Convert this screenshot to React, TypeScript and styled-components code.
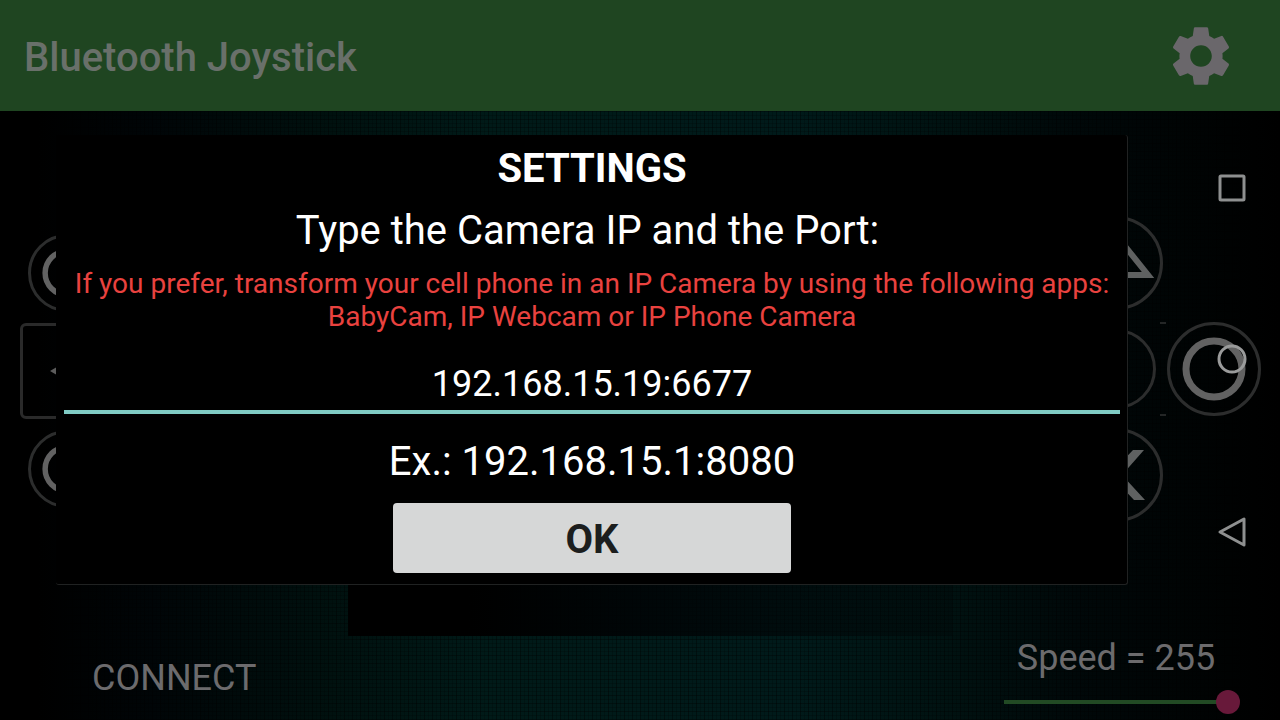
import React, { useState } from "react";
import styled, { createGlobalStyle } from "styled-components";
import { MdSettings } from "react-icons/md";

const GlobalStyle = createGlobalStyle`
  *, *::before, *::after { box-sizing: border-box; }
  body { margin: 0; background: #000; }
  button, input { font-family: inherit; }
`;

const Screen = styled.div`
  position: relative;
  display: flex;
  flex-direction: column;
  min-height: 100vh;
  overflow: hidden;
  font-family: Roboto, "Liberation Sans", sans-serif;
  color: #6c6b6d;
  background:
    repeating-linear-gradient(90deg, rgba(0, 0, 0, 0.4) 0 1px, transparent 1px 4px, rgba(0, 0, 0, 0.2) 4px 5px, transparent 5px 8px),
    repeating-linear-gradient(0deg, rgba(0, 0, 0, 0.35) 0 1px, transparent 1px 4px, rgba(0, 0, 0, 0.2) 4px 5px, transparent 5px 8px),
    linear-gradient(90deg, #000 3%, #000507 12%, #00110f 26%, #001a18 38%, #001a1a 62%, #001211 74%, #000809 84%, #000202 96%, #000 100%);
`;

const AppBar = styled.header`
  display: flex;
  align-items: center;
  justify-content: space-between;
  height: 111px;
  padding: 0 43px 0 24px;
  background: #1f4521;
`;

const Title = styled.h1`
  margin: 4px 0 0;
  font-size: 40px;
  font-weight: 500;
  line-height: 48px;
  color: #69706a;
`;

const PlainButton = styled.button`
  display: flex;
  align-items: center;
  justify-content: center;
  padding: 0;
  border: 0;
  background: none;
  color: inherit;
`;

const Controls = styled.main`
  display: flex;
  flex: 1;
`;

const DirectionPad = styled.section`
  display: flex;
  flex: 0 0 348px;
  flex-direction: column;
  justify-content: center;
  gap: 11px;
  padding: 0 0 5px 20px;
`;

const RoundKey = styled(PlainButton)<{ $size: number }>`
  width: ${(p) => p.$size}px;
  height: ${(p) => p.$size}px;
  border: 3px solid #2c2d2d;
  border-radius: 50%;
  justify-self: center;
  margin-left: ${(p) => (p.$size === 78 ? 8 : 0)}px;
`;

const ArrowKey = styled(PlainButton)`
  width: 94px;
  height: 96px;
  border: 3px solid #2a2a2a;
  border-radius: 6px;
`;

const VideoPanel = styled.div`
  flex: 1;
  margin-top: 48px;
  background: linear-gradient(90deg, #000 20%, rgba(0, 3, 5, 0.85) 50%, rgba(0, 5, 6, 0.3) 100%);
`;

const ActionPad = styled.section`
  display: grid;
  flex: 0 0 328px;
  grid-template-columns: 94px 94px;
  gap: 12px 4px;
  align-content: center;
  align-items: center;
  justify-content: end;
  padding: 0 19px 9px 0;
`;

const OuterCell = styled.div`
  position: relative;
  &::before,
  &::after {
    content: "";
    position: absolute;
    left: -7px;
    width: 6px;
    height: 2px;
    background: #242626;
  }
  &::before { top: 0; }
  &::after { bottom: 0; }
`;

const FirstColumnKey = styled(RoundKey)`
  grid-column: 1;
`;

const Footer = styled.footer`
  display: flex;
  align-items: center;
  justify-content: space-between;
  height: 84px;
  padding: 0 40px 0 92px;
  font-size: 36px;
  line-height: 42px;
`;

const ConnectButton = styled(PlainButton)`
  font-size: 36px;
  line-height: 42px;
`;

const SpeedControl = styled.div`
  display: flex;
  flex-direction: column;
  gap: 11px;
  width: 236px;
  padding-bottom: 5px;
`;

const SpeedLabel = styled.label`
  padding-right: 12px;
  text-align: center;
  white-space: nowrap;
`;

const SpeedSlider = styled.input`
  appearance: none;
  width: 100%;
  height: 24px;
  margin: 0;
  background: none;
  &::-webkit-slider-runnable-track {
    height: 4px;
    background: linear-gradient(90deg, #224a24 95%, transparent 95%);
  }
  &::-webkit-slider-thumb {
    appearance: none;
    width: 24px;
    height: 24px;
    margin-top: -10px;
    border-radius: 50%;
    background: #68193a;
  }
`;

const SystemNav = styled.nav`
  position: absolute;
  top: 174px;
  right: 33px;
  bottom: 172px;
  display: flex;
  flex-direction: column;
  justify-content: space-between;
  align-items: center;
`;

const Dialog = styled.div`
  position: absolute;
  top: 135px;
  left: 56px;
  right: 152px;
  display: flex;
  flex-direction: column;
  padding: 10px 7px 11px 8px;
  border: solid #202222;
  border-width: 0 1px 1px 0;
  border-radius: 3px;
  background: #000;
  color: #fff;
  text-align: center;
  font-size: 40px;
  line-height: 48px;
`;

const DialogTitle = styled.h2`
  margin: 0 0 14px;
  font-size: 40px;
  font-weight: 700;
`;

const FieldLabel = styled.label`
  margin-bottom: 12px;
  padding-right: 9px;
`;

const Hint = styled.p`
  margin: 0 0 25px;
  font-size: 28px;
  line-height: 33px;
  color: #e9423f;
`;

const AddressInput = styled.input`
  width: 100%;
  height: 56px;
  margin-bottom: 24px;
  padding: 0;
  border: 0;
  border-bottom: 4px solid #80cbc4;
  border-radius: 0;
  outline: 0;
  background: none;
  color: #fff;
  font-size: 36px;
  line-height: 42px;
  text-align: center;
`;

const OkButton = styled.button`
  align-self: center;
  width: 398px;
  height: 70px;
  margin-top: 17px;
  padding: 4px 0 0;
  border: 0;
  border-radius: 4px;
  background: #d6d7d7;
  color: #1c1e1e;
  font-size: 40px;
  font-weight: 700;
  line-height: 48px;
`;

const Ring = ({ size }: { size: number }) => (
  <svg width={size} height={size} viewBox="0 0 64 64" fill="none" stroke="#626262" strokeWidth="7">
    <circle cx="32" cy="32" r="28" />
  </svg>
);

export default function App() {
  const [address, setAddress] = useState("192.168.15.19:6677");
  const [speed, setSpeed] = useState(255);

  return (
    <Screen>
      <GlobalStyle />
      <AppBar>
        <Title>Bluetooth Joystick</Title>
        <PlainButton aria-label="Settings">
          <MdSettings size={72} color="#6a676b" />
        </PlainButton>
      </AppBar>

      <Controls>
        <DirectionPad>
          <RoundKey $size={78} aria-label="Upper left">
            <Ring size={50} />
          </RoundKey>
          <ArrowKey aria-label="Left">
            <svg width="34" height="40" viewBox="0 0 34 40" fill="#5c5c5c">
              <path d="M0 20 34 0V40Z" />
            </svg>
          </ArrowKey>
          <RoundKey $size={78} aria-label="Lower left">
            <Ring size={50} />
          </RoundKey>
        </DirectionPad>
        <VideoPanel />
        <ActionPad>
          <FirstColumnKey $size={94} aria-label="Triangle">
            <svg width="80" height="80" viewBox="0 0 80 80" fill="none" stroke="#5f6161" strokeWidth="6">
              <path d="M40 12 72 52H8Z" />
            </svg>
          </FirstColumnKey>
          <FirstColumnKey $size={80} aria-label="Square" />
          <OuterCell>
            <RoundKey $size={94} aria-label="Circle">
              <Ring size={64} />
            </RoundKey>
          </OuterCell>
          <FirstColumnKey $size={94} aria-label="Cross">
            <svg width="60" height="50" viewBox="0 0 60 50" fill="#5f6161">
              <path d="M2 0H13L30 18 47 0H58L36 25 59 50H48L30 31 12 50H1L24 25Z" />
            </svg>
          </FirstColumnKey>
        </ActionPad>
      </Controls>

      <Footer>
        <ConnectButton>CONNECT</ConnectButton>
        <SpeedControl>
          <SpeedLabel htmlFor="speed">Speed = {speed}</SpeedLabel>
          <SpeedSlider
            id="speed"
            type="range"
            min={0}
            max={255}
            value={speed}
            onChange={(e) => setSpeed(Number(e.target.value))}
          />
        </SpeedControl>
      </Footer>

      <Dialog role="dialog" aria-labelledby="settings-title">
        <DialogTitle id="settings-title">SETTINGS</DialogTitle>
        <FieldLabel htmlFor="address">Type the Camera IP and the Port:</FieldLabel>
        <Hint>
          If you prefer, transform your cell phone in an IP Camera by using the following apps: BabyCam, IP Webcam or
          IP Phone Camera
        </Hint>
        <AddressInput id="address" value={address} onChange={(e) => setAddress(e.target.value)} />
        <span>Ex.: 192.168.15.1:8080</span>
        <OkButton>OK</OkButton>
      </Dialog>

      <SystemNav aria-label="System">
        <PlainButton aria-label="Recent apps">
          <svg width="30" height="28" viewBox="0 0 30 28" fill="none" stroke="#8e9090" strokeWidth="3">
            <rect x="3" y="2" width="24" height="24" rx="1" />
          </svg>
        </PlainButton>
        <PlainButton aria-label="Home">
          <svg width="30" height="30" viewBox="0 0 30 30" fill="none" stroke="#9a9b9b" strokeWidth="3">
            <circle cx="15" cy="15" r="13" />
          </svg>
        </PlainButton>
        <PlainButton aria-label="Back">
          <svg width="30" height="32" viewBox="0 0 30 32" fill="none" stroke="#8e9090" strokeWidth="3" strokeLinejoin="round">
            <path d="M3 16 27 3V29Z" />
          </svg>
        </PlainButton>
      </SystemNav>
    </Screen>
  );
}
